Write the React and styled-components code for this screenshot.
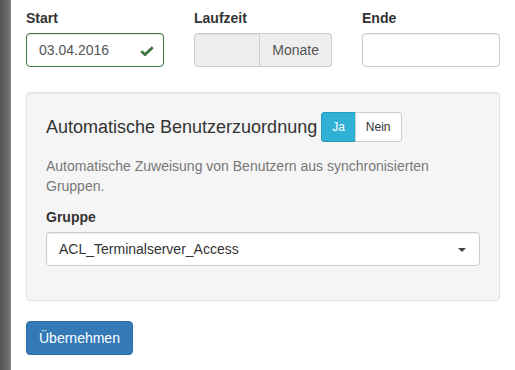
import React from "react";
import styled, { createGlobalStyle } from "styled-components";

const GlobalStyle = createGlobalStyle`
  html, body {
    margin: 0;
    padding: 0;
    background: #fff;
  }
  body {
    font-family: "Liberation Sans", Arial, sans-serif;
    font-size: 14px;
    line-height: 1.42857;
    color: #333;
  }
  * {
    box-sizing: border-box;
  }
`;

const Page = styled.div`
  display: flex;
  width: 515px;
  height: 370px;
  overflow: hidden;
`;

const Strip = styled.div`
  width: 11px;
  flex-shrink: 0;
  background: linear-gradient(to right, #525252, #6e6e6e 80%, #8a8a8a);
`;

const Content = styled.div`
  flex: 1;
  padding-top: 8px;
`;

const Row = styled.div`
  display: grid;
  grid-template-columns: repeat(3, 1fr);
`;

const Col = styled.div`
  padding: 0 15px;
`;

const FormGroup = styled.div`
  margin-bottom: ${(p) => (p.$last ? "15px" : "15px")};
`;

const Label = styled.label`
  display: block;
  font-weight: bold;
  margin-bottom: 5px;
  line-height: 20px;
`;

const InputWrap = styled.div`
  position: relative;
`;

const Input = styled.div`
  height: 34px;
  padding: 6px 12px;
  font-size: 14px;
  line-height: 20px;
  color: #555;
  background: ${(p) => (p.$disabled ? "#eee" : "#fff")};
  border: 1px solid ${(p) => (p.$success ? "#3c763d" : "#ccc")};
  border-radius: ${(p) => (p.$grouped ? "4px 0 0 4px" : "4px")};
  box-shadow: inset 0 1px 1px rgba(0, 0, 0, 0.075);
  flex: 1;
  min-width: 0;
`;

const FeedbackIcon = styled.svg`
  position: absolute;
  right: 10px;
  top: 13px;
`;

const InputGroup = styled.div`
  display: flex;
`;

const Addon = styled.div`
  height: 34px;
  padding: 6px 12px;
  line-height: 20px;
  color: #555;
  background: #eee;
  border: 1px solid #ccc;
  border-left: 0;
  border-radius: 0 4px 4px 0;
  white-space: nowrap;
`;

const Well = styled.div`
  margin: 10px 15px 20px;
  padding: 19px;
  background: #f5f5f5;
  border: 1px solid #e3e3e3;
  border-radius: 4px;
  box-shadow: inset 0 1px 1px rgba(0, 0, 0, 0.05);
`;

const Heading = styled.div`
  display: flex;
  align-items: center;
  gap: 4px;
  margin-bottom: 15px;
`;

const Title = styled.h4`
  margin: 0;
  font-size: 18px;
  font-weight: normal;
  line-height: 30px;
  color: #333;
`;

const ToggleGroup = styled.div`
  display: flex;
`;

const ToggleButton = styled.div`
  height: 30px;
  padding: 5px 10px;
  font-size: 12px;
  line-height: 18px;
  border: 1px solid ${(p) => (p.$active ? "#269abc" : "#ccc")};
  background: ${(p) => (p.$active ? "#31b0d5" : "#fff")};
  color: ${(p) => (p.$active ? "#fff" : "#333")};
  border-radius: ${(p) => (p.$first ? "3px 0 0 3px" : "0 3px 3px 0")};
  margin-left: ${(p) => (p.$first ? "0" : "-1px")};
`;

const Help = styled.p`
  margin: 0 0 10px;
  color: #777;
`;

const Select = styled.div`
  position: relative;
  height: 34px;
  padding: 6px 12px;
  line-height: 20px;
  color: #333;
  background: #fff;
  border: 1px solid #ccc;
  border-radius: 4px;
  box-shadow: inset 0 1px 1px rgba(0, 0, 0, 0.075);
`;

const Caret = styled.span`
  position: absolute;
  right: 13px;
  top: 15px;
  width: 0;
  height: 0;
  border-top: 4px solid #444;
  border-left: 4px solid transparent;
  border-right: 4px solid transparent;
`;

const Footer = styled.div`
  padding: 0 15px;
`;

const PrimaryButton = styled.button`
  height: 34px;
  padding: 6px 12px;
  font-family: inherit;
  font-size: 14px;
  line-height: 20px;
  color: #fff;
  background: #337ab7;
  border: 1px solid #2e6da4;
  border-radius: 4px;
  cursor: pointer;
`;

export default function App() {
  return (
    <>
      <GlobalStyle />
      <Page>
        <Strip />
        <Content>
          <Row>
            <Col>
              <FormGroup>
                <Label>Start</Label>
                <InputWrap>
                  <Input $success>03.04.2016</Input>
                  <FeedbackIcon width="14" height="10" viewBox="0 0 14 10">
                    <path
                      d="M1.3 5.2 L5 8.6 L12.8 1.2"
                      fill="none"
                      stroke="#3c763d"
                      strokeWidth="2.8"
                    />
                  </FeedbackIcon>
                </InputWrap>
              </FormGroup>
            </Col>
            <Col>
              <FormGroup>
                <Label>Laufzeit</Label>
                <InputGroup>
                  <Input $disabled $grouped />
                  <Addon>Monate</Addon>
                </InputGroup>
              </FormGroup>
            </Col>
            <Col>
              <FormGroup>
                <Label>Ende</Label>
                <Input />
              </FormGroup>
            </Col>
          </Row>

          <Well>
            <Heading>
              <Title>Automatische Benutzerzuordnung</Title>
              <ToggleGroup>
                <ToggleButton $active $first>
                  Ja
                </ToggleButton>
                <ToggleButton>Nein</ToggleButton>
              </ToggleGroup>
            </Heading>
            <Help>
              Automatische Zuweisung von Benutzern aus synchronisierten Gruppen.
            </Help>
            <FormGroup>
              <Label>Gruppe</Label>
              <Select>
                ACL_Terminalserver_Access
                <Caret />
              </Select>
            </FormGroup>
          </Well>

          <Footer>
            <PrimaryButton>Übernehmen</PrimaryButton>
          </Footer>
        </Content>
      </Page>
    </>
  );
}
